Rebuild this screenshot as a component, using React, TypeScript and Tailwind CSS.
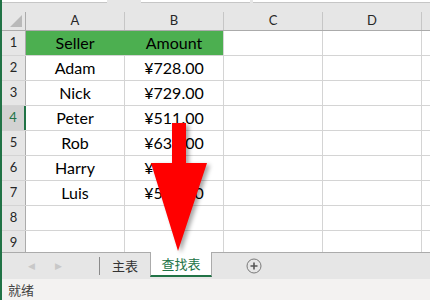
import React from 'react';

const COLS = ['A', 'B', 'C', 'D', ''];

const ROWS: [string, string][] = [
    ['Seller', 'Amount'],
    ['Adam', '¥728.00'],
    ['Nick', '¥729.00'],
    ['Peter', '¥511.00'],
    ['Rob', '¥631.00'],
    ['Harry', '¥548.00'],
    ['Luis', '¥572.00'],
    ['', ''],
    ['', ''],
];

const cjk = { fontFamily: '"Noto Sans CJK SC", "Noto Sans", sans-serif' };

const RedArrow: React.FC = () => (
    <svg
        className="absolute left-0 top-0 pointer-events-none"
        width="430"
        height="300"
        viewBox="0 0 430 300"
        style={{ filter: 'drop-shadow(3px 2px 2px rgba(0,0,0,0.35))' }}
    >
        <polygon
            points="170,123 184,123 184,163 205,163 176,251 149,163 170,163"
            fill="#ff0000"
        />
    </svg>
);

const App: React.FC = () => {
    return (
        <div
            className="relative w-[430px] h-[300px] overflow-hidden bg-white flex flex-col border-l-2 border-[#217346]"
            style={{ fontFamily: 'Lato, "Open Sans", sans-serif' }}
        >
            {/* formula bar edge */}
            <div className="h-[12px] shrink-0 bg-[#e6e6e6] flex gap-[3px] items-start">
                <div className="w-[105px] h-[3px] bg-white border-b border-[#c6c6c6]" />
                <div className="w-[28px]" />
                <div className="w-[109px] h-[3px] bg-white border-b border-[#c6c6c6]" />
                <div className="flex-1 h-[3px] bg-white border-b border-[#c6c6c6]" />
            </div>

            {/* grid */}
            <div className="h-[240px] shrink-0 overflow-hidden">
                {/* column headers */}
                <div className="flex h-[19px] bg-[#e6e6e6] border-b border-[#ababab]">
                    <div className="w-[24px] shrink-0 relative border-r border-[#ababab]">
                        <div className="absolute right-[3px] bottom-[3px] w-0 h-0 border-l-[12px] border-l-transparent border-b-[12px] border-b-[#b9b9b9]" />
                    </div>
                    {COLS.map((c, i) => (
                        <div
                            key={i}
                            className={`${c ? 'w-[99px] border-r border-[#c6c6c6]' : 'flex-1'} shrink-0 flex items-center justify-center text-[13px] text-[#262626]`}
                        >
                            {c}
                        </div>
                    ))}
                </div>

                {ROWS.map(([a, b], r) => (
                    <div key={r} className="flex h-[25px] border-b border-[#d4d4d4]">
                        <div
                            className={`w-[24px] shrink-0 flex items-center justify-center text-[13px] ${
                                r === 3
                                    ? 'bg-[#d2d2d2] text-[#217346] border-r-2 border-[#217346]'
                                    : 'bg-[#e6e6e6] text-[#262626] border-r border-[#ababab]'
                            }`}
                        >
                            {r + 1}
                        </div>
                        <div
                            className={`w-[99px] shrink-0 flex items-center justify-center text-[16px] text-black border-r ${
                                r === 0 ? 'bg-[#4caf50] border-[#4caf50]' : 'border-[#d4d4d4]'
                            }`}
                        >
                            {a}
                        </div>
                        <div
                            className={`w-[99px] shrink-0 flex items-center justify-center text-[16px] text-black border-r ${
                                r === 0 ? 'bg-[#4caf50] border-[#d4d4d4]' : 'border-[#d4d4d4]'
                            }`}
                        >
                            {b}
                        </div>
                        <div className="w-[99px] shrink-0 border-r border-[#d4d4d4]" />
                        <div className="w-[99px] shrink-0 border-r border-[#d4d4d4]" />
                        <div className="flex-1" />
                    </div>
                ))}
            </div>

            {/* sheet tabs */}
            <div className="h-[27px] shrink-0 bg-[#e6e6e6] border-t border-[#ababab] flex items-stretch">
                <div className="w-[97px] shrink-0 flex items-center text-[9px] text-[#c8c8c8]">
                    <span className="ml-[26px]">◀</span>
                    <span className="ml-[20px]">▶</span>
                </div>
                <div className="w-px my-[4px] bg-[#8a8a8a]" />
                <div className="w-[50px] flex items-center justify-center text-[13px] text-[#333]" style={cjk}>
                    主表
                </div>
                <div
                    className="w-[62px] -mt-px bg-white border-x border-[#ababab] border-b-2 border-b-[#217346] flex items-center justify-center text-[13px] text-[#217346] mb-[2px]"
                    style={cjk}
                >
                    查找表
                </div>
                <div className="flex items-center ml-[34px]">
                    <svg width="16" height="16" viewBox="0 0 16 16">
                        <circle cx="8" cy="8" r="7" fill="none" stroke="#7a7a7a" strokeWidth="1" />
                        <path d="M8 4.5v7M4.5 8h7" stroke="#555" strokeWidth="1.6" />
                    </svg>
                </div>
            </div>

            {/* status bar */}
            <div className="flex-1 bg-[#f3f2f1] flex items-center pl-[6px] text-[13px] text-[#444]" style={cjk}>
                就绪
            </div>

            <RedArrow />
        </div>
    );
};

export default App;
